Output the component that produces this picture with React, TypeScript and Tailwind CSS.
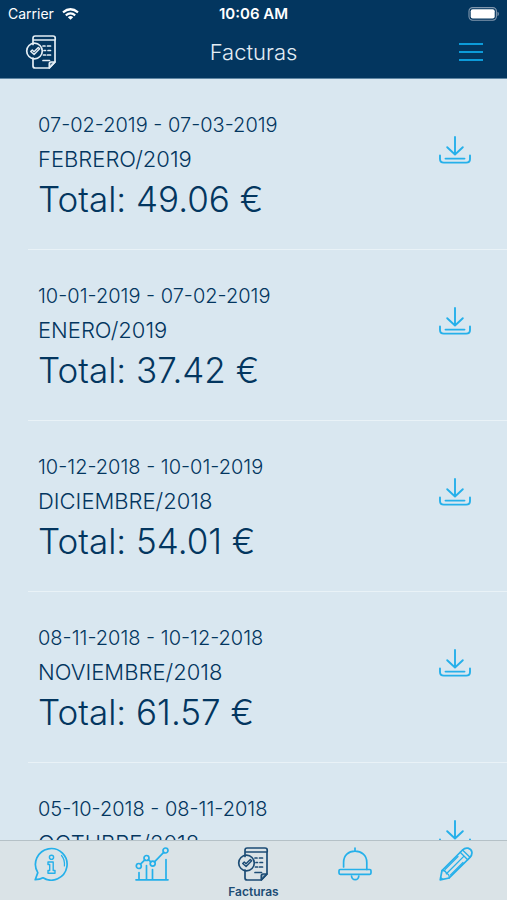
import type { ReactNode } from "react";

type Invoice = { period: string; month: string; total: string };

const invoices: Invoice[] = [
  { period: "07-02-2019 - 07-03-2019", month: "FEBRERO/2019", total: "49.06 €" },
  { period: "10-01-2019 - 07-02-2019", month: "ENERO/2019", total: "37.42 €" },
  { period: "10-12-2018 - 10-01-2019", month: "DICIEMBRE/2018", total: "54.01 €" },
  { period: "08-11-2018 - 10-12-2018", month: "NOVIEMBRE/2018", total: "61.57 €" },
  { period: "05-10-2018 - 08-11-2018", month: "OCTUBRE/2018", total: "52.38 €" },
];

function Icon({ children }: { children: ReactNode }) {
  return (
    <svg
      aria-hidden="true"
      width="34"
      height="34"
      viewBox="0 0 34 34"
      fill="none"
      stroke="currentColor"
      strokeWidth="1.7"
      strokeLinecap="round"
      strokeLinejoin="round"
    >
      {children}
    </svg>
  );
}

function InvoiceIcon() {
  return (
    <Icon>
      <path d="M9 9.5V3.2Q9 1 11.2 1H29Q31.2 1 31.2 3V5H9M31 5V27L25.3 33H11.2Q9 33 9 31V23" />
      <path d="M25.3 33V28.8Q25.3 27 27.1 27H31Z" fill="currentColor" fillOpacity=".35" />
      <circle cx="10.5" cy="16" r="7.8" />
      <path d="M6.7 16.4L8.3 14.9L10 16.7L14.3 12.4L15.7 13.8L10.1 19.4Z" strokeWidth="1.4" />
      <path d="M19 11H21M23.5 11H26.5M20 15.5H21.5M24 15.5H26.5M19.5 20H21.5M23.5 20H26.5M19 25.5H25.5" strokeWidth="1.7" />
    </Icon>
  );
}

function InfoIcon() {
  return (
    <Icon>
      <path d="M1.2 32.7L3.8 25.6A15.8 15.8 0 1 1 9 30.8Q6 32.7 1.2 32.7Z" />
      <path d="M27.5 8.5Q31 12.5 30.4 19" strokeWidth="1.2" />
      <circle cx="17.5" cy="10.3" r="2.1" strokeWidth="1.4" />
      <path d="M14 15H19.2V23.5H21V26.2H14V23.5H15.7V17.5H14Z" strokeWidth="1.4" />
    </Icon>
  );
}

function ChartIcon() {
  return (
    <Icon>
      <path d="M1 32.8H33M4 32V25.5M11.5 32V18.5M17.5 32V22.5M31 32V12.5" />
      <circle cx="3.8" cy="19" r="2.5" />
      <circle cx="11.5" cy="11" r="2.5" />
      <circle cx="17.7" cy="16.6" r="2.5" />
      <circle cx="30.5" cy="3.5" r="2.5" />
      <path d="M5.5 17.2L9.8 12.8M13.3 12.7L15.8 14.9M19.5 14.8L28.7 5.3" />
    </Icon>
  );
}

function BellIcon() {
  return (
    <Icon>
      <path d="M17 1V4M5.6 20V15.5C5.6 8.5 10.5 4.2 17 4.2S28.8 8.5 28.8 15.5V22.5" />
      <rect x="1" y="22.5" width="32" height="4.8" rx="1.2" />
      <path d="M13.5 29Q14 32.7 17.2 32.7T20.8 29" />
    </Icon>
  );
}

function PencilIcon() {
  return (
    <Icon>
      <path d="M1.2 32.8L3 23.5L23.5 3Q26 .5 29 1.2Q32.4 2 32.9 5.2Q33.2 8 31 10.3L10.2 31Z" />
      <path d="M3 23.5Q7 23.2 7.4 26.7Q10.5 27 10.2 31M7.4 26.7L25 9.1M21.2 5.3L28.7 12.8M23.5 3L31 10.3M6 22.5L19 9.5M11.5 28L24 15.5M1.6 30.5L3.7 32.3" strokeWidth="1.3" />
    </Icon>
  );
}

function DownloadIcon() {
  return (
    <svg
      aria-hidden="true"
      width="32"
      height="28"
      viewBox="0 0 32 28"
      fill="none"
      stroke="currentColor"
      strokeWidth="1.9"
      strokeLinecap="round"
      strokeLinejoin="round"
    >
      <path d="M16 1V18.2M8.2 11.2L16 18.5L23.8 11.2M1 19.5V23Q1 26.6 4.8 26.6H27.2Q31 26.6 31 23V19.5M6.5 22.6H25.5" />
    </svg>
  );
}

function StatusBar() {
  return (
    <div className="grid h-7 grid-cols-[1fr_auto_1fr] items-center pr-2 pl-2 text-sm text-white">
      <div className="flex items-center gap-2">
        <span>Carrier</span>
        <svg aria-hidden="true" width="17" height="12" viewBox="0 0 17 12" fill="none" stroke="currentColor" strokeWidth="2.2">
          <path d="M1 4.3Q8.5-1.8 16 4.3M3.8 7.3Q8.5 3.5 13.2 7.3" />
          <path d="M8.5 11.8L5.8 9.2Q8.5 7 11.2 9.2Z" fill="currentColor" stroke="none" />
        </svg>
      </div>
      <span className="text-[15px] font-semibold">10:06 AM</span>
      <svg aria-hidden="true" className="justify-self-end" width="32" height="14" viewBox="0 0 32 14">
        <rect x="2" y=".6" width="27.4" height="12.6" rx="3.6" fill="none" stroke="#8298ae" strokeWidth="1.1" />
        <rect x="3.7" y="2.3" width="24" height="9.2" rx="2" fill="white" />
        <path d="M30.5 4.8Q31.9 5.4 31.9 7T30.5 9.2Z" fill="#8298ae" />
      </svg>
    </div>
  );
}

const tabs = [
  { name: "Información", icon: <InfoIcon />, active: false },
  { name: "Consumo", icon: <ChartIcon />, active: false },
  { name: "Facturas", icon: <InvoiceIcon />, active: true },
  { name: "Avisos", icon: <BellIcon />, active: false },
  { name: "Editar", icon: <PencilIcon />, active: false },
];

export default function App() {
  return (
    <div className="flex h-screen flex-col overflow-hidden bg-[#d9e7f0] font-['Inter','Liberation_Sans',sans-serif] text-[#03365f]">
      <header className="shrink-0 border-b border-[#5f86a3] bg-[#03365f]">
        <StatusBar />
        <div className="grid h-[50px] grid-cols-[1fr_auto_1fr] items-center px-6 pb-[2px] text-[#e4eef5]">
          <InvoiceIcon />
          <h1 className="text-[22px] leading-8 font-light">Facturas</h1>
          <button type="button" aria-label="Menú" className="flex w-6 flex-col gap-[6px] justify-self-end">
            <span className="h-[2px] w-full bg-[#0c9bd9]" />
            <span className="h-[2px] w-full bg-[#0c9bd9]" />
            <span className="h-[2px] w-full bg-[#0c9bd9]" />
          </button>
        </div>
      </header>

      <main className="min-h-0 flex-1 overflow-hidden">
        <ul>
          {invoices.map((invoice) => (
            <li key={invoice.month} className="ml-7 flex items-start justify-between border-b border-[#e9f2f7] pt-[29px] pr-9 pb-[27px] pl-[10px]">
              <div>
                <p className="text-xl leading-[34px] font-light">{invoice.period}</p>
                <p className="text-[22px] leading-[34px] font-light">{invoice.month}</p>
                <p className="text-[35px] leading-[46px] font-light">Total: {invoice.total}</p>
              </div>
              <button type="button" aria-label={`Descargar ${invoice.month}`} className="mt-7 text-[#25b0ea]">
                <DownloadIcon />
              </button>
            </li>
          ))}
        </ul>
      </main>

      <nav className="grid h-[60px] shrink-0 grid-cols-5 border-t border-[#b5c1c7] bg-[#dae3e7]">
        {tabs.map((tab) => (
          <button
            key={tab.name}
            type="button"
            aria-label={tab.name}
            aria-current={tab.active ? "page" : undefined}
            className={`flex flex-col items-center pt-[6px] ${tab.active ? "text-[#1c4c75]" : "text-[#25b0ea]"}`}
          >
            {tab.icon}
            {tab.active && <span className="mt-[3px] text-xs leading-4 font-semibold">{tab.name}</span>}
          </button>
        ))}
      </nav>
    </div>
  );
}
